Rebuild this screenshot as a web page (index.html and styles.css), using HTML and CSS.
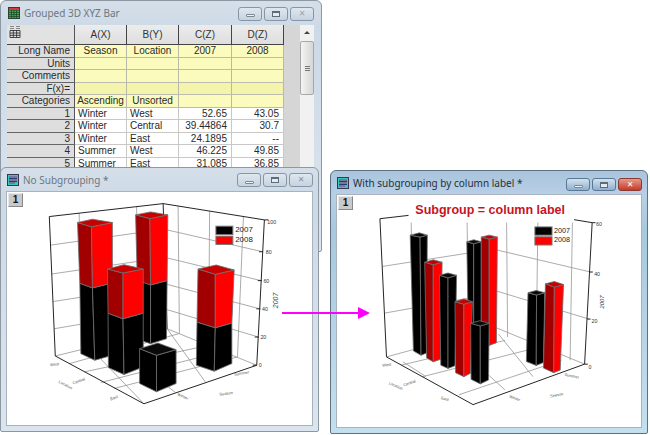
FILE: index.html
```html
<!DOCTYPE html>
<html lang="en">
<head>
<meta charset="utf-8">
<title>Grouped 3D XYZ Bar</title>
<link rel="stylesheet" href="styles.css">
</head>
<body>
<div class="desktop">

  <section class="window book">
    <header class="titlebar">
      <svg class="appicon" viewBox="0 0 12 12"><rect width="12" height="12" fill="#2f3f35"/><rect x="1" y="1" width="10" height="2" fill="#d83a3a"/><path d="M1 3.500h10v7.500h-10z" fill="#37b24a"/><path d="M1 5.500h10M1 7.500h10M1 9.500h10M3.500 3v8M6 3v8M8.500 3v8" stroke="#12351c" stroke-width=".6"/></svg>
      <span class="wintitle">Grouped 3D XYZ Bar</span>
      <div class="controls">
        <span class="ctl"><i class="gl-min"></i></span><span class="ctl"><i class="gl-max"></i></span><span class="ctl"><i class="gl-x">✕</i></span>
      </div>
    </header>
    <div class="sheetpane">
      <div class="sheet">
        <div class="corner"><svg viewBox="0 0 12 12" width="12" height="12"><path d="M1 4.500h10v7h-10zM1 7h10M1 9.300h10M4.300 4.500v7M7.600 4.500v7" fill="none" stroke="#333" stroke-width=".9"/><path d="M1 0.500h4M7 0.500h4M1 2.500h4M7 2.500h4" stroke="#888" stroke-width="1"/></svg></div>
        <div class="colhead">A(X)</div><div class="colhead">B(Y)</div><div class="colhead">C(Z)</div><div class="colhead">D(Z)</div>

        <div class="rowhead">Long Name</div><div class="meta">Season</div><div class="meta">Location</div><div class="meta">2007</div><div class="meta">2008</div>
        <div class="rowhead">Units</div><div class="meta"></div><div class="meta"></div><div class="meta"></div><div class="meta"></div>
        <div class="rowhead">Comments</div><div class="meta"></div><div class="meta"></div><div class="meta"></div><div class="meta"></div>
        <div class="rowhead">F(x)=</div><div class="meta deep"></div><div class="meta deep"></div><div class="meta deep"></div><div class="meta deep"></div>
        <div class="rowhead">Categories</div><div class="meta">Ascending</div><div class="meta">Unsorted</div><div class="meta"></div><div class="meta"></div>

        <div class="rowhead">1</div><div class="cell">Winter</div><div class="cell">West</div><div class="cell num">52.65</div><div class="cell num">43.05</div>
        <div class="rowhead">2</div><div class="cell">Winter</div><div class="cell">Central</div><div class="cell num">39.44864</div><div class="cell num">30.7</div>
        <div class="rowhead">3</div><div class="cell">Winter</div><div class="cell">East</div><div class="cell num">24.1895</div><div class="cell num">--</div>
        <div class="rowhead">4</div><div class="cell">Summer</div><div class="cell">West</div><div class="cell num">46.225</div><div class="cell num">49.85</div>
        <div class="rowhead">5</div><div class="cell">Summer</div><div class="cell">East</div><div class="cell num">31.085</div><div class="cell num">36.85</div>
      </div>
      <div class="scrollbar">
        <span class="arrow"></span>
        <span class="thumb"><i></i></span>
      </div>
    </div>
  </section>

  <section class="window stacked">
    <header class="titlebar">
      <svg class="appicon" viewBox="0 0 12 12"><rect width="12" height="12" fill="#3a3550"/><rect x="1" y="1" width="10" height="10" fill="#35c8c0"/><path d="M2 3h8M2 6h8M2 9h6" stroke="#c02a6a" stroke-width="1"/><path d="M2 4.500h8M2 7.500h8" stroke="#1d3f80" stroke-width="1"/></svg>
      <span class="wintitle">No Subgrouping *</span>
      <div class="controls">
        <span class="ctl"><i class="gl-min"></i></span><span class="ctl"><i class="gl-max"></i></span><span class="ctl"><i class="gl-x">✕</i></span>
      </div>
    </header>
    <div class="graphpane">
      <span class="layer">1</span>
      <svg class="chart" viewBox="18 78 918 702">
        <g class="grid">
          <path d="M149 238L490 190M153 325L493 275M157 408L495 355M160 490L498 432"/>
          <path d="M490 190L788 258M493 275L783 345M495 355L779 430M498 432L775 515"/>
          <path d="M235 141L243 550M408 123L418 510M533 120L537 505M628 135L625 540M730 150L712 575"/>
          <path d="M163 572L500 490L770 600"/>
          <path d="M205 595L535 505M250 620L625 540M340 670L712 575M300 652L590 578"/>
          <path d="M430 716L280 560M525 682L420 600M615 650L500 490"/>
        </g>
        <g class="axis">
          <path d="M145 152L488 113L793 162M145 152L163 572M488 113L500 490M793 162L770 600M163 572L430 716L770 600"/>
          <path d="M793 162h12M789 258h-12M785 345h-12M781 430h-12M776 515h-12M770 600h-12"/>
        </g>

        <g class="bar">
          <polygon class="blk" points="237,353 275,367 282,585 240,565"/><polygon class="blk" points="275,367 335,352 335,570 282,585"/>
          <polygon class="darkred" points="230,170 272,183 275,367 237,353"/><polygon class="red" points="272,183 335,170 335,352 275,367"/>
          <polygon class="topred" points="230,170 275,160 335,170 272,183"/>
        </g>
        <g class="bar">
          <polygon class="blk" points="420,345 450,358 450,535 420,525"/><polygon class="blk" points="450,358 500,345 498,520 450,535"/>
          <polygon class="darkred" points="405,147 448,158 450,358 410,345"/><polygon class="red" points="448,158 502,147 500,345 450,358"/>
          <polygon class="topred" points="405,147 450,138 502,147 448,158"/>
        </g>
        <g class="bar">
          <polygon class="blk" points="322,443 367,460 370,628 323,607"/><polygon class="blk" points="367,460 428,443 428,605 370,628"/>
          <polygon class="darkred" points="320,310 367,322 367,460 322,443"/><polygon class="red" points="367,322 428,310 428,443 367,460"/>
          <polygon class="topred" points="320,310 370,297 428,310 367,322"/>
        </g>
        <g class="bar">
          <polygon class="blk" points="417,550 468,570 468,680 417,655"/><polygon class="blk" points="468,570 527,553 527,655 468,680"/>
          <polygon class="topblk" points="417,550 472,533 527,553 468,570"/>
        </g>
        <g class="bar">
          <polygon class="blk" points="590,470 645,487 642,618 588,600"/><polygon class="blk" points="645,487 695,473 695,595 642,618"/>
          <polygon class="darkred" points="593,310 645,326 645,487 590,470"/><polygon class="red" points="645,326 702,313 695,473 645,487"/>
          <polygon class="topred" points="593,310 648,298 702,313 645,326"/>
        </g>

        <rect class="key blk" x="647" y="181" width="51" height="25"/>
        <rect class="key red" x="647" y="211" width="51" height="25"/>
        <text class="legend" x="705" y="200">2007</text>
        <text class="legend" x="705" y="228">2008</text>

        <text class="tick" x="802" y="175">100</text>
        <text class="tick" x="797" y="264">80</text>
        <text class="tick" x="790" y="353">60</text>
        <text class="tick" x="786" y="437">40</text>
        <text class="tick" x="781" y="522">20</text>
        <text class="tick" x="776" y="606">0</text>
        <text class="axtitle" transform="translate(833 428) rotate(-90)">2007</text>

        <text class="cat" transform="translate(148 603) rotate(-8)">West</text>
        <text class="cat" transform="translate(217 658) rotate(-20)">Central</text>
        <text class="cat" transform="translate(330 706) rotate(-20)">East</text>
        <text class="cat" transform="translate(172 652) rotate(28)">Location</text>
        <text class="cat" transform="translate(530 690) rotate(25)">Winter</text>
        <text class="cat" transform="translate(658 692) rotate(-8)">Season</text>
        <text class="cat" transform="translate(703 632) rotate(-10)">Summer</text>
      </svg>
    </div>
  </section>

  <section class="window grouped">
    <header class="titlebar">
      <svg class="appicon" viewBox="0 0 12 12"><rect width="12" height="12" fill="#3a3550"/><rect x="1" y="1" width="10" height="10" fill="#35c8c0"/><path d="M2 3h8M2 6h8M2 9h6" stroke="#c02a6a" stroke-width="1"/><path d="M2 4.500h8M2 7.500h8" stroke="#1d3f80" stroke-width="1"/></svg>
      <span class="wintitle">With subgrouping by column label *</span>
      <div class="controls">
        <span class="ctl"><i class="gl-min"></i></span><span class="ctl"><i class="gl-max"></i></span><span class="ctl close"><i class="gl-x">✕</i></span>
      </div>
    </header>
    <div class="graphpane">
      <span class="layer">1</span>
      <svg class="chart" viewBox="33 88 917 705">
        <text class="charttitle" x="495" y="147">Subgroup = column label</text>
        <g class="grid">
          <path d="M168 305L425 265M174 447L425 402M515 255L800 322M515 380L795 465"/>
          <path d="M255 172L262 560M425 172L430 500M545 172L548 520M640 172L635 560M745 172L738 590"/>
          <path d="M180 580L510 490L782 602"/>
          <path d="M225 605L540 530M290 640L625 555M400 695L712 590"/>
          <path d="M300 640L230 595M540 680L440 590M625 640L520 510"/>
        </g>
        <g class="axis">
          <path d="M160 160L247 150M750 163L805 172M160 160L180 580M805 172L782 602M180 580L443 725L782 602"/>
          <path d="M805 172h10M797 322h10M790 465h10M782 602h10"/>
        </g>

        <g class="bar">
          <polygon class="blk" points="252,210 282,216 285,575 262,562"/><polygon class="blk" points="282,216 304,210 302,568 285,575"/>
          <polygon class="topblk" points="252,210 280,203 304,210 282,216"/>
        </g>
        <g class="bar">
          <polygon class="blk" points="424,230 445,236 445,480 428,470"/><polygon class="blk" points="445,236 468,230 468,500 445,480"/>
          <polygon class="topblk" points="424,230 445,224 468,230 445,236"/>
        </g>
        <g class="bar">
          <polygon class="darkred" points="468,216 492,222 492,545 468,535"/><polygon class="red" points="492,222 517,216 514,537 492,545"/>
          <polygon class="topred" points="468,216 492,210 517,216 492,222"/>
        </g>
        <g class="bar">
          <polygon class="darkred" points="296,292 322,300 322,595 302,583"/><polygon class="red" points="322,300 349,292 345,587 322,595"/>
          <polygon class="topred" points="296,292 322,285 349,292 322,300"/>
        </g>
        <g class="bar">
          <polygon class="blk" points="341,332 367,340 367,615 345,605"/><polygon class="blk" points="367,340 393,332 388,607 367,615"/>
          <polygon class="topblk" points="341,332 367,325 393,332 367,340"/>
        </g>
        <g class="bar">
          <polygon class="darkred" points="388,412 415,420 415,640 390,628"/><polygon class="red" points="415,420 441,412 435,630 415,640"/>
          <polygon class="topred" points="388,412 415,404 441,412 415,420"/>
        </g>
        <g class="bar">
          <polygon class="blk" points="436,478 465,486 465,662 437,648"/><polygon class="blk" points="465,486 492,478 490,650 465,662"/>
          <polygon class="topblk" points="436,478 463,470 492,478 465,486"/>
        </g>
        <g class="bar">
          <polygon class="blk" points="610,385 636,392 635,606 605,594"/><polygon class="blk" points="636,392 661,385 657,597 635,606"/>
          <polygon class="topblk" points="610,385 635,378 661,385 636,392"/>
        </g>
        <g class="bar">
          <polygon class="darkred" points="663,358 690,368 688,628 657,614"/><polygon class="red" points="690,368 718,360 708,620 688,628"/>
          <polygon class="topred" points="663,358 690,351 718,360 690,368"/>
        </g>

        <rect class="key blk" x="631" y="185" width="52" height="25"/>
        <rect class="key red" x="631" y="215" width="52" height="25"/>
        <text class="legend small" x="689" y="202">2007</text>
        <text class="legend small" x="689" y="232">2008</text>

        <text class="tick" x="817" y="182">60</text>
        <text class="tick" x="811" y="334">40</text>
        <text class="tick" x="803" y="478">20</text>
        <text class="tick" x="794" y="617">0</text>
        <text class="axtitle thin" transform="translate(842 433) rotate(-90)">2007</text>

        <text class="cat" transform="translate(168 610) rotate(-8)">West</text>
        <text class="cat" transform="translate(233 670) rotate(-20)">Central</text>
        <text class="cat" transform="translate(345 708) rotate(15)">East</text>
        <text class="cat" transform="translate(186 662) rotate(25)">Location</text>
        <text class="cat" transform="translate(552 703) rotate(20)">Winter</text>
        <text class="cat" transform="translate(678 703) rotate(-10)">Season</text>
        <text class="cat" transform="translate(720 637) rotate(12)">Summer</text>
      </svg>
    </div>
  </section>

  <svg class="arrowlink" viewBox="0 0 90 14"><path d="M0 7H78" stroke="#ff00ff" stroke-width="2"/><polygon points="76,1 88,7 76,13" fill="#ff00ff"/></svg>
</div>
</body>
</html>
```
FILE: styles.css
```css
* { box-sizing: border-box; }
html, body { margin: 0; padding: 0; background: #fff; }
.desktop { position: relative; width: 650px; height: 435px; overflow: hidden; background: #fff; font-family: "Liberation Sans", Arial, sans-serif; }

.window {
  position: absolute;
  display: flex;
  flex-direction: column;
  border: 1px solid #8d98a3;
  border-radius: 6px 6px 2px 2px;
  padding: 0 5px 5px;
  background: linear-gradient(180deg, #d5dfe9 0, #ccd9e6 30px, #dbe5ef 100%);
}
.book { left: 0; top: 0; width: 322px; height: 252px; padding: 0 7px 5px 6px; }
.stacked { left: 0; top: 167px; width: 319px; height: 265px; }
.grouped { left: 330px; top: 170px; width: 318px; height: 264px; background: linear-gradient(180deg, #a9c4dc 0, #b7d0e6 24px, #a8c8de 60px, #c3e0ee 100%); border-color: #5f7183; }

.titlebar { display: flex; align-items: center; height: 23px; flex: none; padding-left: 1px; }
.book .titlebar { height: 24px; }
.appicon { width: 12px; height: 12px; flex: none; }
.wintitle { margin-left: 4px; font: 10px "Noto Sans", sans-serif; color: #6d7782; white-space: nowrap; }
.grouped .wintitle { color: #26303a; }
.controls { margin-left: auto; margin-top: 1px; display: flex; gap: 2px; }
.grouped .controls { margin-top: 4px; }
.ctl { display: flex; align-items: center; justify-content: center; width: 24px; height: 14px; border: 1px solid #8496a8; border-radius: 3px; background: linear-gradient(180deg, #dfe7ef, #c6d3df); }
.grouped .ctl { height: 13px; background: linear-gradient(180deg, #d3e2f0, #8fb0cf); border-color: #5a7894; }
.grouped .ctl.close { background: linear-gradient(180deg, #e49a88, #c6392a); border-color: #8a3a30; }
.ctl i { display: block; font-style: normal; }
.gl-min { width: 9px; height: 3px; margin-top: 4px; background: #eef3f7; border: 1px solid #7b8793; border-radius: 1px; }
.gl-max { width: 8px; height: 6px; border: 1px solid #5e6c7a; border-top-width: 2px; background: #e4eaf0; }
.gl-x { font: bold 8px/1 "DejaVu Sans", sans-serif; color: #8793a0; }
.grouped .gl-x { color: #fff; }
.book .gl-x { color: #9aa6b2; }

.sheetpane { display: flex; flex: 1; min-height: 0; background: #d6d6d6; overflow: hidden; }
.sheet { display: grid; grid-template-columns: 68px 52px 52px 53px 52px; grid-auto-rows: 12.500px; grid-template-rows: 20px; width: 277px; font-size: 10px; color: #2a2a2a; line-height: 12px; }
.sheet > div { border-right: 1px solid #b9b9a8; border-bottom: 1px solid #bcbcae; white-space: nowrap; overflow: hidden; }
.sheet > .corner { background: #e2e2e2; padding: 1px 0 0 2px; border-right: 1px solid #555; border-bottom: 1px solid #444; }
.sheet > .colhead { display: flex; align-items: center; justify-content: center; background: linear-gradient(180deg, #ececec, #dedede); border-right: 1px solid #444; border-bottom: 1px solid #444; color: #333; }
.sheet > .rowhead { background: #dedede; border-right: 1px solid #555; border-bottom: 1px solid #666; text-align: right; padding-right: 4px; color: #2a2a2a; }
.sheet > .meta { background: #fbfbbe; text-align: center; }
.sheet > .meta.deep { background: #f4f4ac; }
.sheet > .cell { background: #fff; padding-left: 3px; border-color: #c8c8c8; }
.sheet > .cell.num { text-align: right; padding: 0 4px 0 0; }

.scrollbar { flex: 1; position: relative; margin-left: 16px; background: #f1f1f1; display: flex; flex-direction: column; align-items: center; }
.arrow { width: 0; height: 0; margin-top: 6px; border: 3px solid transparent; border-top-width: 0; border-bottom: 3px solid #444; }
.thumb { display: flex; align-items: center; justify-content: center; width: 100%; height: 54px; margin-top: 7px; background: linear-gradient(90deg, #f4f4f4, #d6d6d6); border: 1px solid #a8a8a8; border-radius: 2px; }
.thumb i { width: 5px; height: 5px; border-top: 1px solid #777; border-bottom: 1px solid #777; background: linear-gradient(#777, #777) center / 100% 1px no-repeat; }

.graphpane { position: relative; flex: 1; min-height: 0; background: #fff; border: 1px solid #a9b3bd; overflow: hidden; }
.chart { display: block; width: 100%; height: 100%; }
.layer { position: absolute; left: 1px; top: 1px; width: 15px; height: 14px; background: #c9c9c9; border: 1px solid; border-color: #e8e8e8 #888 #888 #e8e8e8; font: bold 10px/12px "Liberation Sans", sans-serif; text-align: center; color: #111; }

.grid path { fill: none; stroke: #9a9a9a; stroke-width: 2.500; }
.axis path { fill: none; stroke: #222; stroke-width: 3; }
.bar polygon { stroke: #6e6e6e; stroke-width: 2.500; stroke-linejoin: round; }
.blk { fill: #000; }
.topblk { fill: #0a0a0a; }
.red { fill: #ff0000; }
.darkred { fill: #a20000; }
.topred { fill: #c80000; }
.key { stroke: #777; stroke-width: 3; }
.legend { font-size: 24px; fill: #222; }
.legend.small { font-size: 22px; }
.tick { font-size: 16px; fill: #333; }
.axtitle { font-size: 21px; font-style: italic; fill: #444; }
.axtitle.thin { font-size: 18px; }
.cat { font-size: 12px; fill: #555; }
.charttitle { font-size: 38px; font-weight: bold; fill: #c8141e; text-anchor: middle; }

.arrowlink { position: absolute; left: 282px; top: 306px; width: 90px; height: 14px; }
```
